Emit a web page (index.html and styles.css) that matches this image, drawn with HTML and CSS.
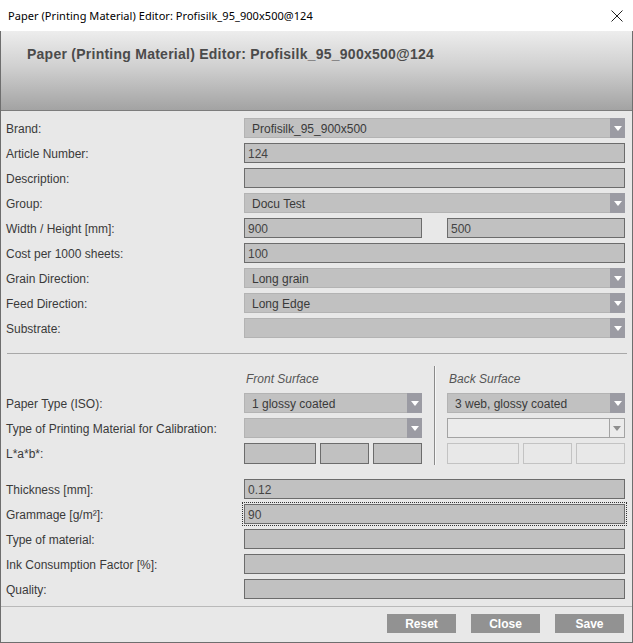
FILE: index.html
```html
<!DOCTYPE html>
<html>
<head>
<meta charset="utf-8">
<link rel="stylesheet" href="styles.css">
</head>
<body>
<div class="window">
  <div class="titlebar">
    <span class="title-text">Paper (Printing Material) Editor: Profisilk_95_900x500@124</span>
    <svg class="close-x" width="12" height="12" viewBox="0 0 12 12"><path d="M0.5 0.5 L11.5 11.5 M11.5 0.5 L0.5 11.5" stroke="#222" stroke-width="1" fill="none"/></svg>
  </div>
  <div class="client">
    <div class="header"><h1 class="header-title">Paper (Printing Material) Editor: Profisilk_95_900x500@124</h1></div>
    <div class="form">
      <div class="grid">
        <div class="label">Brand:</div>
        <div class="combo"><span class="combo-text">Profisilk_95_900x500</span><span class="combo-btn"><i class="tri"></i></span></div>
        <div class="label">Article Number:</div>
        <div class="field">124</div>
        <div class="label">Description:</div>
        <div class="field"></div>
        <div class="label">Group:</div>
        <div class="combo"><span class="combo-text">Docu Test</span><span class="combo-btn"><i class="tri"></i></span></div>
        <div class="label">Width / Height [mm]:</div>
        <div class="pair"><div class="field">900</div><div class="field">500</div></div>
        <div class="label">Cost per 1000 sheets:</div>
        <div class="field">100</div>
        <div class="label">Grain Direction:</div>
        <div class="combo"><span class="combo-text">Long grain</span><span class="combo-btn"><i class="tri"></i></span></div>
        <div class="label">Feed Direction:</div>
        <div class="combo"><span class="combo-text">Long Edge</span><span class="combo-btn"><i class="tri"></i></span></div>
        <div class="label">Substrate:</div>
        <div class="combo"><span class="combo-text"></span><span class="combo-btn"><i class="tri"></i></span></div>
      </div>
      <div class="hr"></div>
      <div class="surface">
        <div class="label"></div>
        <div class="surf-head">Front Surface</div>
        <div class="vsep"></div>
        <div class="surf-head">Back Surface</div>

        <div class="label">Paper Type (ISO):</div>
        <div class="combo"><span class="combo-text">1 glossy coated</span><span class="combo-btn"><i class="tri"></i></span></div>
        <div class="combo"><span class="combo-text">3 web, glossy coated</span><span class="combo-btn"><i class="tri"></i></span></div>

        <div class="label">Type of Printing Material for Calibration:</div>
        <div class="combo"><span class="combo-text"></span><span class="combo-btn"><i class="tri"></i></span></div>
        <div class="combo disabled"><span class="combo-text"></span><span class="combo-btn"><i class="tri"></i></span></div>

        <div class="label">L*a*b*:</div>
        <div class="lab"><div class="field"></div><div class="field"></div><div class="field"></div></div>
        <div class="lab off"><div class="field"></div><div class="field"></div><div class="field"></div></div>
      </div>
      <div class="grid lower">
        <div class="label">Thickness [mm]:</div>
        <div class="field">0.12</div>
        <div class="label">Grammage [g/m²]:</div>
        <div class="field focus">90</div>
        <div class="label">Type of material:</div>
        <div class="field"></div>
        <div class="label">Ink Consumption Factor [%]:</div>
        <div class="field"></div>
        <div class="label">Quality:</div>
        <div class="field"></div>
      </div>
    </div>
    <div class="footer">
      <button class="btn">Reset</button>
      <button class="btn">Close</button>
      <button class="btn">Save</button>
    </div>
  </div>
</div>
</body>
</html>
```
FILE: styles.css
```css
* { box-sizing: border-box; }
html, body { margin: 0; padding: 0; background: #ffffff; }
body { font-family: "Liberation Sans", Arial, sans-serif; font-size: 12px; color: #3a3a3a; }

.window { width: 633px; height: 643px; display: flex; flex-direction: column; }

.titlebar {
  height: 31px; flex: none; background: #ffffff;
  display: flex; align-items: center; justify-content: space-between;
  padding: 0 10px 0 8px;
}
.title-text { font-family: "Noto Sans", "Liberation Sans", sans-serif; font-size: 11px; color: #000; letter-spacing: 0.05px; }
.close-x { display: block; margin-top: 1px; }

.client {
  flex: 1; display: flex; flex-direction: column;
  background: #e8e8e8;
  border: 1px solid #6e6e6e; border-top: none;
}

.header {
  height: 80px; flex: none;
  background: linear-gradient(to bottom, #ededed 0%, #d0d0d0 45%, #a3a3a3 100%);
  border-bottom: 1px solid #7c7c7c;
  padding: 15px 0 0 26px;
}
.header-title { margin: 0; font-size: 14px; font-weight: bold; color: #4b4b4b; letter-spacing: 0.25px; }

.form { padding: 7px 7px 0 5px; }

.grid {
  display: grid; grid-template-columns: 238px 381px;
  grid-auto-rows: 20px; row-gap: 5px;
}
.label { display: flex; align-items: center; white-space: nowrap; color: #3a3a3a; padding-top: 1px; }

.field {
  height: 20px; background: #c1c1c1; border: 1px solid #6c6c6c;
  padding: 1px 3px 0; display: flex; align-items: center; color: #444;
}
.field.focus { outline: 1px dotted #333; outline-offset: 1px; }

.pair { display: grid; grid-template-columns: 178px 178px; column-gap: 25px; }

.combo {
  height: 20px; background: #c1c1c1; border: 1px solid #b3b3b3;
  display: flex; align-items: stretch; color: #3a3a3a;
}
.combo-text { flex: 1; display: flex; align-items: center; padding: 1px 0 0 7px; }
.combo-btn {
  width: 15px; flex: none; background: #9b9ba3;
  display: flex; align-items: center; justify-content: center;
  margin: -1px -1px -1px 0;
}
.tri {
  width: 0; height: 0; border-left: 4px solid transparent; border-right: 4px solid transparent;
  border-top: 5px solid #ffffff; margin-top: 1px;
}
.combo.disabled { background: #ebebeb; border-color: #a3a3a3; }
.combo.disabled .combo-btn { background: transparent; border-left: 1px solid #a3a3a3; margin: 0; }
.combo.disabled .tri { border-top-color: #8e8e8e; }

.hr { height: 1px; background: #a8a8a8; margin: 15px -2px 0 1px; }

.surface {
  margin-top: 14px;
  display: grid; grid-template-columns: 238px 178px 25px 178px;
  grid-template-rows: 20px 20px 20px 20px; row-gap: 5px;
}
.surf-head { display: flex; align-items: center; font-style: italic; color: #555; padding-left: 2px; padding-top: 1px; }
.vsep {
  grid-column: 3; grid-row: 1 / span 4;
  width: 2px; justify-self: center; margin: -2px 0 -2px 0;
  background: #8a8a8a; border-right: 1px solid #f6f6f6;
}
.surface > :nth-child(6), .surface > :nth-child(9), .surface > :nth-child(12) { grid-column: 2; }
.surface > :nth-child(7), .surface > :nth-child(10), .surface > :nth-child(13) { grid-column: 4; }

.lab { display: grid; grid-template-columns: 72px 49px 49px; column-gap: 4px; }
.lab .field { height: 21px; }
.lab.off .field { background: transparent; border-color: #c3c3c3; }

.lower { margin-top: 16px; }

.footer {
  margin-top: auto; border-top: 1px solid #b9b9b9;
  height: 36px; flex: none;
  display: flex; justify-content: flex-end; align-items: flex-start;
  padding: 7px 8px 0 0; gap: 15px;
}
.btn {
  width: 69px; height: 19px; border: none; background: #929292;
  color: #ffffff; font-family: "Liberation Sans", Arial, sans-serif;
  font-size: 12px; font-weight: bold; padding: 1px 0 0; margin: 0;
}
```
